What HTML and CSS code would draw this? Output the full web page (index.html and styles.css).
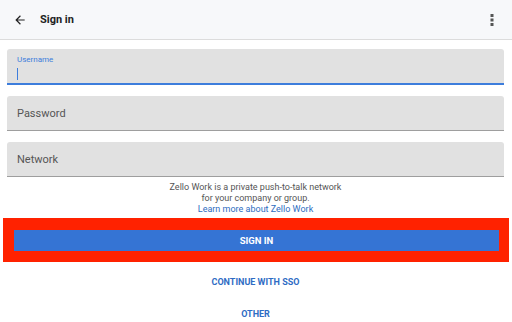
FILE: index.html
```html
<!DOCTYPE html>
<html>
<head>
<meta charset="utf-8">
<link rel="stylesheet" href="styles.css">
</head>
<body>
<header class="appbar">
  <svg class="back" width="14" height="14" viewBox="0 0 24 24"><path d="M20 11H7.83l5.59-5.59L12 4l-8 8 8 8 1.41-1.41L7.83 13H20v-2z" fill="#222"/></svg>
  <span class="title">Sign in</span>
  <span class="spacer"></span>
  <svg class="more" width="4" height="12" viewBox="0 0 4 12"><rect x="0.5" y="0" width="3" height="3" fill="#555"/><rect x="0.5" y="4.5" width="3" height="3" fill="#555"/><rect x="0.5" y="9" width="3" height="3" fill="#555"/></svg>
</header>
<main class="form">
  <div class="field active">
    <span class="label">Username</span>
    <span class="caret"></span>
  </div>
  <div class="field"><span class="placeholder">Password</span></div>
  <div class="field"><span class="placeholder">Network</span></div>
  <p class="info">Zello Work is a private push-to-talk network<br>for your company or group.<br><a class="link">Learn more about Zello Work</a></p>
  <div class="highlight">
    <div class="primary">SIGN IN</div>
  </div>
  <div class="textbtn sso">CONTINUE WITH SSO</div>
  <div class="textbtn other">OTHER</div>
</main>
</body>
</html>
```
FILE: styles.css
```css
* { box-sizing: border-box; }
html, body { margin: 0; padding: 0; background: #fff; }
body { font-family: Roboto, "Liberation Sans", sans-serif; width: 512px; height: 322px; overflow: hidden; }
.appbar {
  height: 40px;
  background: #f7f8fa;
  border-bottom: 1px solid #dcdcdc;
  display: flex;
  align-items: center;
  padding: 0 18px 0 13px;
}
.back { margin-right: 13px; }
.title { font-size: 11px; font-weight: 700; color: #222; }
.spacer { flex: 1; }
.more { display: block; }
.form { display: flex; flex-direction: column; padding: 9px 8px 0 7px; }
.field {
  height: 35px;
  background: #e1e1e1;
  border-radius: 3px 3px 0 0;
  border-bottom: 1px solid #9e9e9e;
  margin-bottom: 11px;
  display: flex;
  flex-direction: column;
  justify-content: center;
  padding-left: 10px;
}
.field.active { height: 36px; border-bottom: 2px solid #3d7ddc; justify-content: flex-start; padding-top: 6px; }
.label { font-size: 8px; color: #3d7ddc; line-height: 10px; }
.caret { width: 1px; height: 12px; background: #3d7ddc; margin-top: 3px; }
.placeholder { font-size: 11px; color: #555; }
.info {
  margin: -6px 0 0 0;
  text-align: center;
  font-size: 9px;
  line-height: 11px;
  color: #555;
}
.link { color: #2e6cc0; }
.highlight {
  margin: 3px -5px 0 -4px;
  background: #ff2200;
  padding: 12px 10px 11px 11px;
}
.primary {
  height: 21px;
  background: #3574d4;
  color: #fff;
  font-size: 9.5px;
  font-weight: 700;
  display: flex;
  align-items: center;
  justify-content: center;
}
.textbtn {
  text-align: center;
  font-size: 9px;
  font-weight: 700;
  color: #2f6cc4;
  line-height: 11px;
}
.sso { margin-top: 15px; }
.other { margin-top: 21px; }
```
